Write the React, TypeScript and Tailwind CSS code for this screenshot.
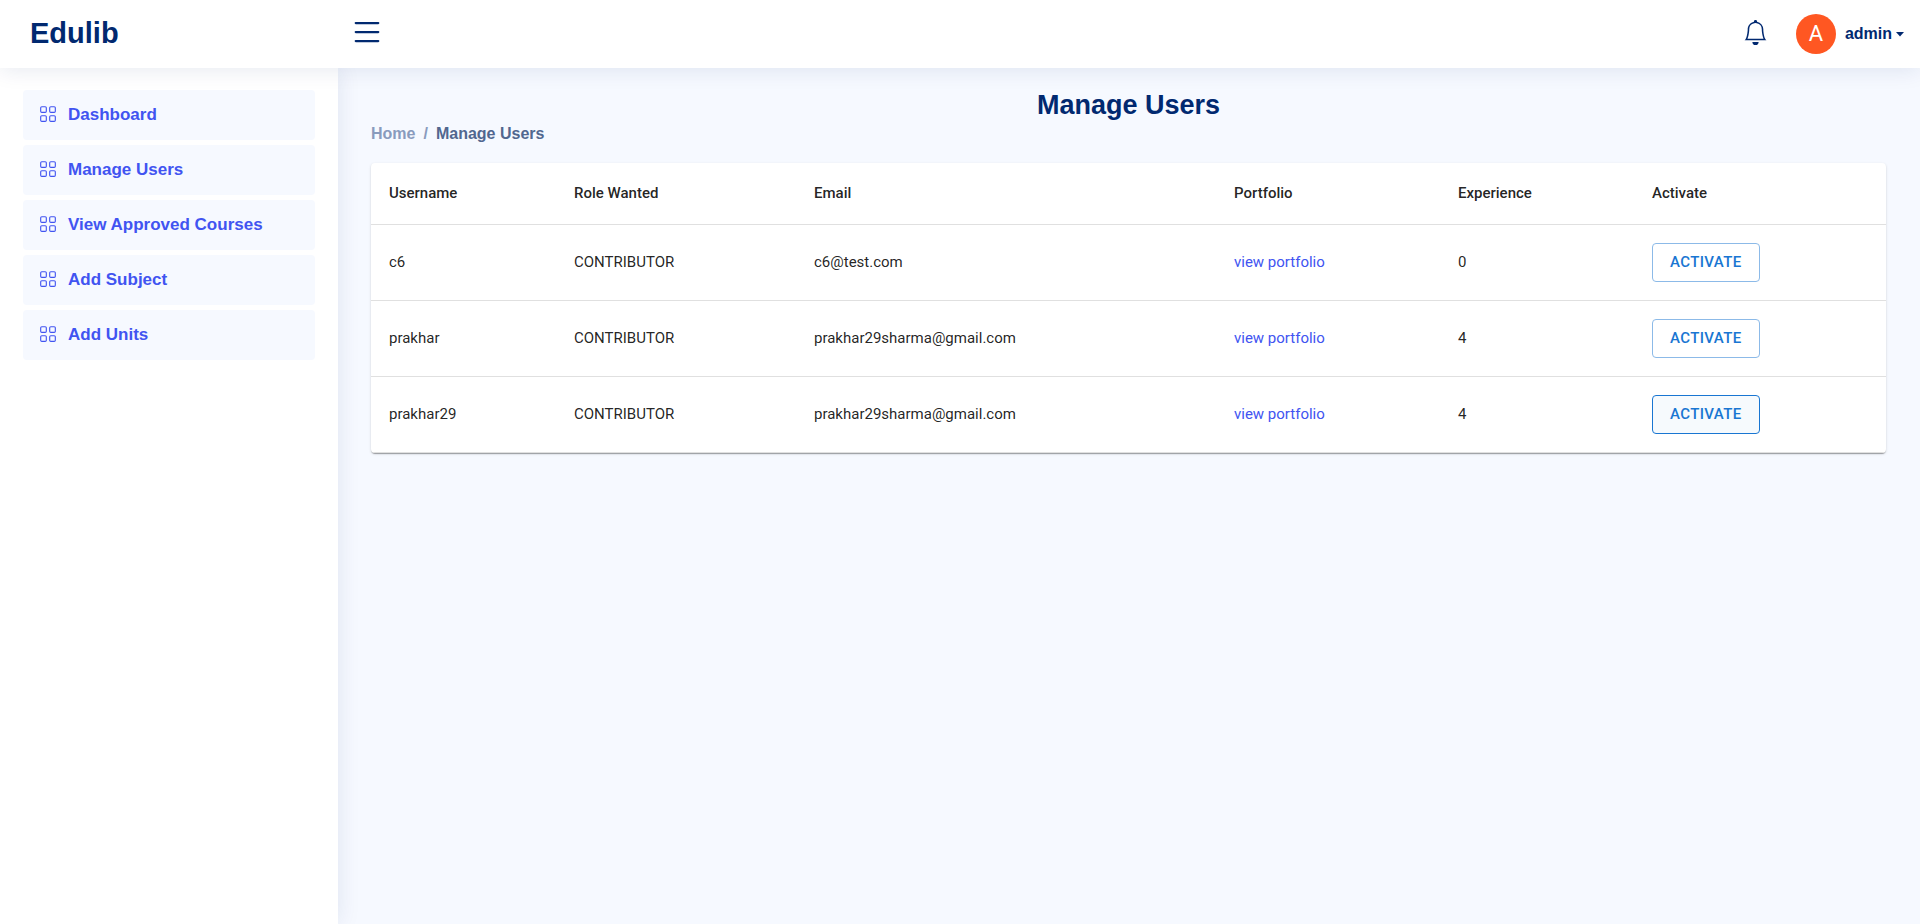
import { BsBell, BsGrid, BsList } from "react-icons/bs";

const NAV_ITEMS = ["Dashboard", "Manage Users", "View Approved Courses", "Add Subject", "Add Units"];

const USERS = [
  { username: "c6", role: "CONTRIBUTOR", email: "c6@test.com", experience: 0, active: false },
  { username: "prakhar", role: "CONTRIBUTOR", email: "prakhar29sharma@gmail.com", experience: 4, active: false },
  { username: "prakhar29", role: "CONTRIBUTOR", email: "prakhar29sharma@gmail.com", experience: 4, active: true },
];

const HEADINGS = ["Username", "Role Wanted", "Email", "Portfolio", "Experience", "Activate"];

function Header() {
  return (
    <header className="relative z-20 flex h-17 items-center bg-white pr-4 text-[#012970] shadow-[0_2px_22px_rgba(1,41,112,0.1)]">
      <div className="flex w-[349px] shrink-0 items-center pb-0.5 pl-[30px]">
        <a href="#" className="text-[29px] leading-9 font-bold">
          Edulib
        </a>
      </div>
      <button type="button" aria-label="Toggle sidebar" className="pb-1">
        <BsList className="size-9" />
      </button>
      <div className="ml-auto flex items-center">
        <button type="button" aria-label="Notifications" className="mr-7 pb-1">
          <BsBell className="size-[25px]" />
        </button>
        <button type="button" className="flex items-center text-base font-bold">
          <span className="mr-[9px] flex size-10 items-center justify-center rounded-full bg-[#ff5722] font-[Roboto,sans-serif] text-[22px] leading-none font-normal text-white">
            A
          </span>
          admin
          <svg viewBox="0 0 8 5" className="ml-1 h-[5px] w-2 fill-current" aria-hidden="true">
            <path d="M0 0h8L4 4.5z" />
          </svg>
        </button>
      </div>
    </header>
  );
}

function Sidebar() {
  return (
    <aside className="relative z-10 w-[338px] shrink-0 bg-white px-[23px] pt-[22px] shadow-[0_0_22px_rgba(1,41,112,0.1)]">
      <nav>
        <ul className="flex flex-col gap-[5px]">
          {NAV_ITEMS.map((item) => (
            <li key={item}>
              <a
                href="#"
                className="flex h-[50px] items-center gap-[11px] rounded bg-[#f6f9ff] px-4 text-[17px] font-bold text-[#4154f1]"
              >
                <BsGrid className="mb-0.5 size-[18px]" />
                {item}
              </a>
            </li>
          ))}
        </ul>
      </nav>
    </aside>
  );
}

function UsersTable() {
  return (
    <div className="mt-[17px] overflow-hidden rounded bg-white shadow-[0_2px_1px_-1px_rgba(0,0,0,0.2),0_1px_1px_rgba(0,0,0,0.14),0_1px_3px_rgba(0,0,0,0.12)]">
      <table className="w-full table-fixed text-left font-[Roboto,sans-serif] text-[15px] leading-6 text-black/87">
        <colgroup>
          <col className="w-[185px]" />
          <col className="w-[240px]" />
          <col className="w-[420px]" />
          <col className="w-[224px]" />
          <col className="w-[194px]" />
          <col className="w-[252px]" />
        </colgroup>
        <thead>
          <tr className="h-[61px] border-b border-[#e0e0e0]">
            {HEADINGS.map((heading) => (
              <th key={heading} scope="col" className="px-[18px] pb-px font-medium">
                {heading}
              </th>
            ))}
          </tr>
        </thead>
        <tbody>
          {USERS.map((user) => (
            <tr key={user.username} className="h-[76px] border-b border-[#e0e0e0]">
              <td className="px-[18px]">{user.username}</td>
              <td className="px-[18px]">{user.role}</td>
              <td className="px-[18px]">{user.email}</td>
              <td className="px-[18px]">
                <a href="#" className="text-[#4154f1]">
                  view portfolio
                </a>
              </td>
              <td className="px-[18px]">{user.experience}</td>
              <td className="px-[18px]">
                <button
                  type="button"
                  className={
                    user.active
                      ? "flex h-[39px] items-center rounded border border-[#1976d2] bg-[#f6fafd] px-[17px] font-medium tracking-wide text-[#1976d2]"
                      : "flex h-[39px] items-center rounded border border-[#8cbae8] px-[17px] font-medium tracking-wide text-[#1976d2]"
                  }
                >
                  ACTIVATE
                </button>
              </td>
            </tr>
          ))}
        </tbody>
      </table>
    </div>
  );
}

export default function App() {
  return (
    <div className="flex min-h-screen flex-col bg-[#f6f9ff] font-['Liberation_Sans',Arial,sans-serif]">
      <Header />
      <div className="flex grow">
        <Sidebar />
        <main className="min-w-0 grow pt-[21px] pr-[34px] pl-[33px]">
          <h1 className="text-center text-[27px] leading-8 font-bold text-[#012970]">Manage Users</h1>
          <nav aria-label="Breadcrumb" className="mt-px">
            <ol className="flex gap-2 text-base leading-6 font-bold text-[#899bbd]">
              <li>
                <a href="#">Home</a>
              </li>
              <li aria-hidden="true">/</li>
              <li className="text-[#51678f]" aria-current="page">
                Manage Users
              </li>
            </ol>
          </nav>
          <UsersTable />
        </main>
      </div>
    </div>
  );
}
